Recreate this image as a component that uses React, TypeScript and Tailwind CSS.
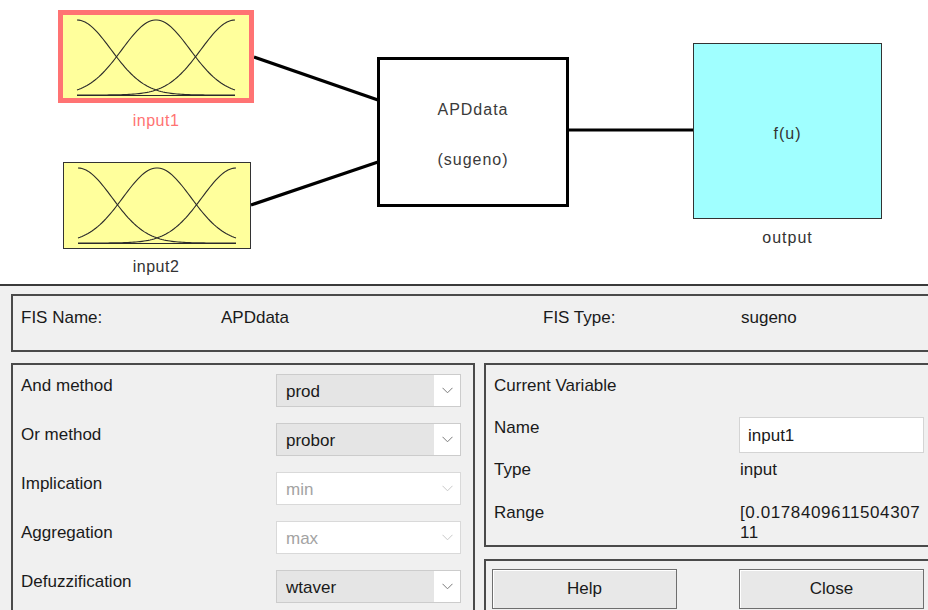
import React from 'react';

// membership function sketch drawn inside each input block
const gaussPath = (x0: number, x1: number, top: number, bot: number, c: number, s: number) => {
  const pts: string[] = [];
  for (let x = x0; x <= x1; x += 2) {
    const y = bot - (bot - top) * Math.exp(-((x - c) ** 2) / (2 * s * s));
    pts.push(`${x.toFixed(1)},${y.toFixed(2)}`);
  }
  return 'M' + pts.join(' L');
};

const MfCurves: React.FC = () => {
  const x0 = 14;
  const x1 = 172;
  const mid = (x0 + x1) / 2;
  return (
    <svg width="186" height="83" viewBox="0 0 186 83" className="block">
      {[x0, mid, x1].map((c) => (
        <path key={c} d={gaussPath(x0, x1, 5, 80, c, 34)} fill="none" stroke="#2b2b2b" strokeWidth="1.1" />
      ))}
      <line x1={x0} y1="80.5" x2={x1} y2="80.5" stroke="#2b2b2b" strokeWidth="1.2" />
    </svg>
  );
};

const Chevron: React.FC<{ color: string }> = ({ color }) => (
  <svg width="11" height="7" viewBox="0 0 11 7">
    <path d="M0.5 0.8 L5.5 5.8 L10.5 0.8" fill="none" stroke={color} strokeWidth="1" />
  </svg>
);

const Dropdown: React.FC<{ value: string; disabled?: boolean }> = ({ value, disabled }) => (
  <div
    className={`flex h-[33px] w-[185px] border ${
      disabled ? 'border-[#d9d9d9] bg-white text-[#a3a3a3]' : 'border-[#cccccc] bg-[#e5e5e5] text-[#1a1a1a]'
    }`}
  >
    <div className="flex flex-1 items-center pl-[9px] pt-[3px]">{value}</div>
    <div className="flex w-[26px] items-center justify-center bg-white">
      <Chevron color={disabled ? '#c8c8c8' : '#7a7a7a'} />
    </div>
  </div>
);

const methods = [
  { label: 'And method', value: 'prod' },
  { label: 'Or method', value: 'probor' },
  { label: 'Implication', value: 'min', disabled: true },
  { label: 'Aggregation', value: 'max', disabled: true },
  { label: 'Defuzzification', value: 'wtaver' },
];

export default function App() {
  return (
    <div className="h-[610px] w-[928px] overflow-hidden bg-white font-['Liberation_Sans',Arial,sans-serif] text-[17px] leading-5 text-[#1a1a1a]">
      {/* FIS diagram */}
      <div className="relative h-[284px]">
        <svg className="pointer-events-none absolute inset-0" width="928" height="284">
          <line x1="254" y1="57" x2="378" y2="100" stroke="#000" strokeWidth="3.2" />
          <line x1="251" y1="205" x2="378" y2="162" stroke="#000" strokeWidth="3.2" />
          <line x1="569" y1="130" x2="694" y2="130" stroke="#000" strokeWidth="3.2" />
        </svg>

        <div className="absolute left-[58px] top-[10px] h-[93px] w-[196px] border-[5px] border-[#ff7373] bg-[#ffff9c]">
          <MfCurves />
        </div>
        <div className="absolute left-[58px] top-[111px] w-[196px] text-center text-[16px] tracking-[0.5px] text-[#ff7373]">
          input1
        </div>

        <div className="absolute left-[63px] top-[162px] h-[87px] w-[188px] border border-[#333] bg-[#ffff9c]">
          <MfCurves />
        </div>
        <div className="absolute left-[58px] top-[257px] w-[196px] text-center text-[16px] tracking-[0.5px] text-[#333]">
          input2
        </div>

        <div className="absolute left-[377px] top-[57px] flex h-[150px] w-[192px] flex-col items-center border-[3px] border-black bg-white pt-[40px] text-[16px] tracking-[1px] text-[#3a3a3a]">
          <span>APDdata</span>
          <span className="mt-[30px]">(sugeno)</span>
        </div>

        <div className="absolute left-[693px] top-[43px] flex h-[176px] w-[189px] items-center justify-center border border-[#333] bg-[#a0ffff] pt-[6px] text-[16px] tracking-[1px] text-[#333]">
          f(u)
        </div>
        <div className="absolute left-[693px] top-[228px] w-[189px] text-center text-[16px] tracking-[1px] text-[#333]">
          output
        </div>
      </div>

      {/* settings area */}
      <div className="h-[326px] w-[960px] border-t-2 border-[#3a3a3a] bg-[#f0f0f0] pl-[11px] pt-2">
        <div className="flex h-[58px] border-2 border-[#4a4a4a] pl-2 pt-[12px]">
          <span className="w-[200px]">FIS Name:</span>
          <span className="w-[322px]">APDdata</span>
          <span className="w-[198px]">FIS Type:</span>
          <span>sugeno</span>
        </div>

        <div className="mt-[11px] flex gap-[9px]">
          <div className="flex h-[260px] w-[464px] flex-col gap-4 border-2 border-[#4a4a4a] pl-2 pt-[9px]">
            {methods.map((m) => (
              <div key={m.label} className="flex">
                <span className="w-[255px] pt-[2px]">{m.label}</span>
                <Dropdown value={m.value} disabled={m.disabled} />
              </div>
            ))}
          </div>

          <div className="flex flex-1 flex-col gap-3">
            <div className="h-[184px] border-2 border-[#4a4a4a] pl-2 pt-[11px]">
              <div>Current Variable</div>
              <div className="mt-[21px] flex">
                <span className="w-[245px] pt-px">Name</span>
                <div className="flex h-[36px] w-[185px] items-center border border-[#d4d4d4] bg-white pl-[8px] pt-px">
                  input1
                </div>
              </div>
              <div className="mt-[7px] flex">
                <span className="w-[246px]">Type</span>
                <span>input</span>
              </div>
              <div className="mt-[23px] flex">
                <span className="w-[246px]">Range</span>
                <div className="flex flex-col tracking-[0.6px]">
                  <span>[0.0178409611504307</span>
                  <span>11</span>
                </div>
              </div>
            </div>

            <div className="flex h-[80px] gap-[62px] border-2 border-[#4a4a4a] pl-[6px] pt-2">
              {['Help', 'Close'].map((b) => (
                <div
                  key={b}
                  className="flex h-[40px] w-[185px] items-center justify-center border border-[#6e6e6e] bg-[#e8e8e8] shadow-[inset_1px_1px_0_#ffffff]"
                >
                  {b}
                </div>
              ))}
            </div>
          </div>
        </div>
      </div>
    </div>
  );
}
